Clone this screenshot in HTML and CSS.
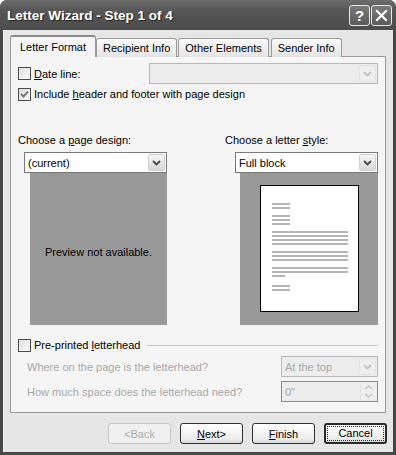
FILE: index.html
```html
<!DOCTYPE html>
<html lang="en">
<head>
    <meta charset="UTF-8">
    <title>Letter Wizard - Step 1 of 4</title>
    <link rel="stylesheet" href="styles.css">
</head>
<body>
    <div class="window">
        <div class="titlebar">
            <span class="title">Letter Wizard - Step 1 of 4</span>
            <div class="title-buttons">
                <span class="tbtn">?</span>
                <span class="tbtn">
                    <svg width="13" height="13" viewBox="0 0 13 13"><path d="M2 2 L11 11 M11 2 L2 11" stroke="#fff" stroke-width="2.2" stroke-linecap="square"/></svg>
                </span>
            </div>
        </div>

        <div class="client">
            <div class="tabs">
                <div class="tab active">Letter Format</div>
                <div class="tab">Recipient Info</div>
                <div class="tab">Other Elements</div>
                <div class="tab">Sender Info</div>
            </div>

            <div class="panel">
                <div class="row row-date">
                    <span class="check"></span>
                    <span class="label"><u>D</u>ate line:</span>
                    <div class="combo disabled wide">
                        <span class="combo-text"></span>
                        <span class="combo-btn"><svg width="9" height="6" viewBox="0 0 9 6"><path d="M1 1 L4.5 4.5 L8 1" fill="none" stroke="#c4c4c4" stroke-width="1.8"/></svg></span>
                    </div>
                </div>
                <div class="row row-header">
                    <span class="check checked">
                        <svg width="11" height="11" viewBox="0 0 11 11"><path d="M2 5 L4.5 7.5 L9 2.5" fill="none" stroke="#7a7a7a" stroke-width="2"/></svg>
                    </span>
                    <span class="label">Include <u>h</u>eader and footer with page design</span>
                </div>

                <div class="designs">
                    <div class="col col-left">
                        <div class="col-label">Choose a <u>p</u>age design:</div>
                        <div class="combo">
                            <span class="combo-text">(current)</span>
                            <span class="combo-btn"><svg width="9" height="6" viewBox="0 0 9 6"><path d="M1 1 L4.5 4.5 L8 1" fill="none" stroke="#444" stroke-width="1.8"/></svg></span>
                        </div>
                        <div class="preview">Preview not available.</div>
                    </div>
                    <div class="col col-right">
                        <div class="col-label">Choose a letter <u>s</u>tyle:</div>
                        <div class="combo">
                            <span class="combo-text">Full block</span>
                            <span class="combo-btn"><svg width="9" height="6" viewBox="0 0 9 6"><path d="M1 1 L4.5 4.5 L8 1" fill="none" stroke="#444" stroke-width="1.8"/></svg></span>
                        </div>
                        <div class="preview">
                            <div class="page">
                                <div class="ln"></div>
                                <div class="ln gap"></div>
                                <div class="ln"></div>
                                <div class="ln"></div>
                                <div class="ln gap"></div>
                                <div class="ln long"></div>
                                <div class="ln long"></div>
                                <div class="ln long"></div>
                                <div class="ln long gap"></div>
                                <div class="ln long"></div>
                                <div class="ln long"></div>
                                <div class="ln long gap"></div>
                                <div class="ln long"></div>
                                <div class="ln long"></div>
                                <div class="ln tiny gap"></div>
                                <div class="ln gap wide-gap"></div>
                                <div class="ln"></div>
                            </div>
                        </div>
                    </div>
                </div>

                <div class="row group-head">
                    <span class="check"></span>
                    <span class="label">Pre-printed <u>l</u>etterhead</span>
                    <span class="rule"></span>
                </div>
                <div class="field-row">
                    <span class="field-label">Where on the page is the letterhead?</span>
                    <div class="combo disabled small">
                        <span class="combo-text">At the top</span>
                        <span class="combo-btn"><svg width="9" height="6" viewBox="0 0 9 6"><path d="M1 1 L4.5 4.5 L8 1" fill="none" stroke="#c4c4c4" stroke-width="1.8"/></svg></span>
                    </div>
                </div>
                <div class="field-row">
                    <span class="field-label">How much space does the letterhead need?</span>
                    <div class="spin small">
                        <span class="combo-text">0"</span>
                        <span class="spin-btns">
                            <svg width="9" height="5" viewBox="0 0 9 5"><path d="M1 4 L4.5 1 L8 4" fill="none" stroke="#c4c4c4" stroke-width="1.5"/></svg>
                            <svg width="9" height="5" viewBox="0 0 9 5"><path d="M1 1 L4.5 4 L8 1" fill="none" stroke="#c4c4c4" stroke-width="1.5"/></svg>
                        </span>
                    </div>
                </div>
            </div>

            <div class="footer">
                <button class="btn" disabled>&lt;Back</button>
                <button class="btn"><u>N</u>ext&gt;</button>
                <button class="btn"><u>F</u>inish</button>
                <button class="btn default"><span class="focus">Cancel</span></button>
            </div>
        </div>
    </div>
</body>
</html>
```

FILE: styles.css
```css
body {
    margin: 0;
    font-family: 'Liberation Sans', Arial, sans-serif;
    font-size: 11px;
    color: #000;
    background: #fff;
}
u {
    text-decoration: underline;
    text-underline-offset: 1px;
}
.window {
    width: 396px;
    height: 455px;
    box-sizing: border-box;
    background: #474747;
    border-radius: 7px 7px 0 0;
    padding: 0 3px 3px 3px;
    display: flex;
    flex-direction: column;
}
.titlebar {
    height: 30px;
    display: flex;
    align-items: center;
    justify-content: space-between;
    background: linear-gradient(#6e6e6e 0%, #585858 30%, #4c4c4c 100%);
    margin: 0 -3px;
    border-radius: 7px 7px 0 0;
    padding-left: 7px;
    padding-right: 4px;
}
.title {
    color: #fff;
    font-weight: bold;
    font-size: 13.5px;
    text-shadow: 1px 1px 1px #222;
    margin-top: 1px;
}
.title-buttons {
    display: flex;
    gap: 1px;
}
.tbtn {
    width: 19px;
    height: 19px;
    border: 1px solid #e8e8e8;
    border-radius: 3px;
    background: linear-gradient(#7a7a7a, #5a5a5a);
    color: #fff;
    font-weight: bold;
    font-size: 15px;
    display: flex;
    align-items: center;
    justify-content: center;
}
.client {
    flex: 1;
    background: #e6e6e6;
    border-left: 1px solid #f4f4f4;
    padding: 6px 6px 0 6px;
}
.tabs {
    display: flex;
    align-items: flex-end;
    height: 21px;
    position: relative;
    z-index: 1;
}
.tab {
    height: 18px;
    line-height: 18px;
    padding: 0 6px;
    border: 1px solid #9a9a9a;
    border-bottom: none;
    border-radius: 3px 3px 0 0;
    background: linear-gradient(#fbfbfb, #e4e4e4);
    margin-right: 1px;
}
.tab.active {
    height: 20px;
    line-height: 20px;
    padding: 0 9px;
    background: #f5f5f5;
    margin-right: 0;
    border-top: 2px solid #8a8a8a;
}
.tab:nth-child(4) {
    margin-left: 1px;
}
.panel {
    border: 1px solid #9a9a9a;
    background: #f5f5f5;
    margin-top: -1px;
    padding: 6px 7px 0 7px;
    width: 360px;
    height: 349px;
}
.row {
    display: flex;
    align-items: center;
}
.row-date {
    height: 21px;
}
.row-header {
    height: 14px;
    margin-top: 3px;
}
.check {
    width: 11px;
    height: 11px;
    border: 1px solid #4c4c4c;
    background: linear-gradient(135deg, #dedede, #fdfdfd);
    display: flex;
    align-items: center;
    justify-content: center;
    flex-shrink: 0;
}
.label {
    margin-left: 3px;
    white-space: nowrap;
}
.combo {
    height: 19px;
    border: 1px solid #7a7a7a;
    background: #fff;
    display: flex;
    align-items: center;
    justify-content: space-between;
    padding: 0 1px 0 3px;
}
.combo.wide {
    margin-left: auto;
    width: 223px;
}
.combo.disabled, .spin {
    border-color: #b8b8b8;
    background: #ececec;
    color: #a8a8a8;
}
.combo-btn {
    width: 17px;
    height: 17px;
    box-sizing: border-box;
    border: 1px solid #d0d0d0;
    border-radius: 2px;
    background: linear-gradient(#f6f6f6, #d8d8d8);
    display: flex;
    align-items: center;
    justify-content: center;
}
.disabled .combo-btn {
    background: #eeeeee;
    border-color: #e2e2e2;
}
.designs {
    display: flex;
    justify-content: space-between;
    margin-top: 32px;
}
.col-left {
    width: 149px;
}
.col-right {
    width: 153px;
}
.col-label {
    height: 14px;
    line-height: 14px;
    margin-bottom: 5px;
    white-space: nowrap;
}
.col-left .combo {
    margin-left: 6px;
}
.col-right .combo {
    margin-left: 10px;
}
.preview {
    height: 152px;
    box-sizing: border-box;
    background: #999999;
    display: flex;
    align-items: center;
    justify-content: center;
}
.col-left .preview {
    margin-left: 12px;
    padding-top: 6px;
}
.col-right .preview {
    margin-left: 15px;
    align-items: flex-start;
    padding-top: 12px;
}
.page {
    border: 1px solid #000;
    background: #fff;
    padding: 17px 0 0 11px;
    width: 86px;
    height: 108px;
}
.ln {
    width: 18px;
    height: 2px;
    background: #b4b4b4;
    margin-bottom: 2px;
}
.ln.long {
    width: 76px;
}
.ln.tiny {
    width: 13px;
}
.ln.gap {
    margin-bottom: 6px;
}
.ln.wide-gap {
    margin-bottom: 2px;
}
.ln.tiny.gap {
    margin-bottom: 8px;
}
.group-head {
    height: 14px;
    margin-top: 13px;
}
.rule {
    flex: 1;
    height: 1px;
    background: #c8c8c8;
    margin-left: 7px;
    margin-top: 1px;
}
.field-row {
    display: flex;
    align-items: center;
    justify-content: space-between;
    height: 21px;
    margin-top: 4px;
    padding-left: 9px;
}
.field-label {
    color: #a8a8a8;
}
.small {
    width: 91px;
}
.spin {
    height: 19px;
    border: 1px solid #8a8a8a;
    display: flex;
    align-items: center;
    justify-content: space-between;
    padding: 0 1px 0 3px;
}
.spin-btns {
    width: 15px;
    height: 17px;
    display: flex;
    flex-direction: column;
    align-items: center;
    justify-content: space-around;
    background: #eeeeee;
    border-left: 1px solid #e0e0e0;
}
.footer {
    display: flex;
    justify-content: flex-end;
    gap: 9px;
    margin-top: 10px;
}
.btn {
    width: 63px;
    height: 21px;
    padding: 0;
    border: 1px solid #2e2e2e;
    border-radius: 3px;
    background: linear-gradient(#fefefe, #ececec 80%, #d6d6d6);
    font-family: 'Liberation Sans', Arial, sans-serif;
    font-size: 11px;
    color: #000;
}
.btn:disabled {
    border-color: #c4c4c4;
    color: #adadad;
    background: #f0f0f0;
}
.btn.default {
    border: 2px solid #2a2a2a;
    display: flex;
    align-items: center;
    justify-content: center;
}
.focus {
    display: block;
    width: 55px;
    height: 13px;
    line-height: 13px;
    border: 1px dotted #333;
}
```
